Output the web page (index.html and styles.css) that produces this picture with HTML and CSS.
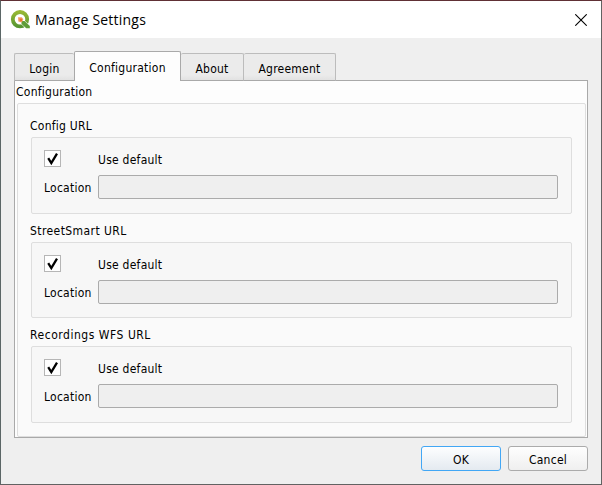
FILE: index.html
```html
<!DOCTYPE html>
<html lang="en">
<head>
<meta charset="utf-8">
<title>Manage Settings</title>
<link rel="stylesheet" href="styles.css">
</head>
<body>
<div class="window">
  <header class="titlebar">
    <svg class="logo" width="20" height="20" viewBox="0 0 20 20">
      <defs><linearGradient id="g" x1="0" y1="0" x2="0" y2="1"><stop offset="0" stop-color="#97b834"/><stop offset="1" stop-color="#589632"/></linearGradient></defs>
      <circle cx="10" cy="9.2" r="7.2" fill="none" stroke="url(#g)" stroke-width="3.8"/>
      <path d="M10 10h4l6 5.5v3.3h-4.1L10 13z" fill="#fff"/>
      <path d="M11.5 11h3l5.3 5v2.3h-3.6L11.5 14z" fill="#5f9c38"/>
      <path d="M8 7.3h3.8l1.5 2-1.5 3.2-3.5-1z" fill="#f5a36b"/>
      <path d="M9.5 8.5l2.6.2v2.5H9.8z" fill="#e9762b"/>
    </svg>
    <h1 class="title">Manage Settings</h1>
    <svg class="close" width="12" height="12" viewBox="0 0 12 12"><path d="M.3.3l11.4 11.4M11.7.3L.3 11.7" stroke="#000" stroke-width="1.1"/></svg>
  </header>
  <main class="content">
    <nav class="tabs">
      <div class="tab login">Login</div>
      <div class="tab configuration active">Configuration</div>
      <div class="tab about">About</div>
      <div class="tab agreement">Agreement</div>
    </nav>
    <section class="panel">
      <h2 class="panel-title">Configuration</h2>
      <div class="outer">
        <h3 class="label">Config URL</h3>
        <div class="group">
          <div class="row check-row"><span class="check"><svg width="15" height="15" viewBox="0 0 15 15"><path d="M3.2 7.2L6.3 12 12 2.6" fill="none" stroke="#000" stroke-width="2.3"/></svg></span><span class="use">Use default</span></div>
          <div class="row"><span class="location">Location</span><div class="field"></div></div>
        </div>
        <h3 class="label street">StreetSmart URL</h3>
        <div class="group short">
          <div class="row check-row"><span class="check"><svg width="15" height="15" viewBox="0 0 15 15"><path d="M3.2 7.2L6.3 12 12 2.6" fill="none" stroke="#000" stroke-width="2.3"/></svg></span><span class="use">Use default</span></div>
          <div class="row"><span class="location">Location</span><div class="field"></div></div>
        </div>
        <h3 class="label wfs">Recordings WFS URL</h3>
        <div class="group">
          <div class="row check-row"><span class="check"><svg width="15" height="15" viewBox="0 0 15 15"><path d="M3.2 7.2L6.3 12 12 2.6" fill="none" stroke="#000" stroke-width="2.3"/></svg></span><span class="use">Use default</span></div>
          <div class="row"><span class="location">Location</span><div class="field"></div></div>
        </div>
      </div>
    </section>
    <footer class="buttons">
      <button class="btn primary">OK</button>
      <button class="btn">Cancel</button>
    </footer>
  </main>
</div>
</body>
</html>
```
FILE: styles.css
```css
* { box-sizing: border-box; }
body {
  margin: 0;
  font: 12px/16px "DejaVu Sans Condensed", "DejaVu Sans", sans-serif;
  font-stretch: condensed;
  letter-spacing: .25px;
  color: #000;
}
h1, h2, h3 { margin: 0; font-size: inherit; font-weight: normal; }
.window {
  width: 602px;
  height: 485px;
  border: 1px solid #626262;
  border-top-color: #603035;
  border-left-color: #5b6666;
  background: #efefef;
}
.titlebar {
  display: flex;
  align-items: center;
  height: 37px;
  padding: 0 14px 0 9px;
  background: #fff;
}
.logo { display: block; }
.title {
  flex: 1;
  padding-left: 5px;
  font: 14px/20px "Open Sans", sans-serif;
  letter-spacing: .22px;
}
.close { display: block; }
.content { padding: 13px 13px 0; }
.tabs {
  display: flex;
  align-items: flex-end;
  height: 30px;
  margin-bottom: -1px;
  position: relative;
}
.tab {
  height: 28px;
  border: 1px solid #bcbcbc;
  border-left-width: 0;
  border-bottom-color: #a9a9a9;
  border-radius: 2px 2px 0 0;
  background: linear-gradient(#ebebeb 80%, #e2e2e2);
  text-align: center;
  line-height: 30px;
}
.login { width: 60px; border-left-width: 1px; border-right-width: 0; }
.configuration { width: 107px; }
.about { width: 63px; }
.agreement { width: 92px; }
.tab.active {
  height: 30px;
  border: 1px solid #a9a9a9;
  border-bottom: 0;
  background: #fdfdfd;
  line-height: 32px;
}
.panel {
  height: 358px;
  padding: 2px 1px 0 2px;
  border: 1px solid #a9a9a9;
  background: #fdfdfd;
}
.panel-title { height: 20px; line-height: 18px; margin-left: -1px; }
.outer {
  height: 334px;
  padding: 14px 13px 0;
  border: 1px solid #dedede;
  border-radius: 2px;
  background: #fafafa;
}
.label { height: 19px; margin-left: -1px; }
.group + .label { height: 28px; padding-top: 9px; }
.street { letter-spacing: .42px; }
.wfs { letter-spacing: .53px; }
.group {
  height: 77px;
  padding: 12px 13px 0 12px;
  border: 1px solid #dedede;
  border-radius: 2px;
  background: #f7f7f7;
}
.short { height: 76px; }
.row { display: flex; align-items: center; }
.check-row { height: 17px; margin-bottom: 8px; }
.check {
  width: 17px;
  height: 17px;
  margin-right: 37px;
  border: 1px solid #b6b6b6;
  background: #fff;
}
.check svg { display: block; }
.use { padding-top: 2px; }
.location { width: 54px; padding-top: 2px; }
.field {
  flex: 1;
  height: 24px;
  border: 1px solid #ababab;
  border-radius: 2px;
  background: #efefef;
}
.buttons {
  display: flex;
  justify-content: flex-end;
  gap: 7px;
  margin-top: 8px;
}
.btn {
  width: 80px;
  height: 25px;
  padding: 2px 0 0;
  border: 1px solid #ababab;
  border-radius: 3px;
  background: linear-gradient(#fefefe, #efefef);
  font: inherit;
  letter-spacing: inherit;
  color: inherit;
}
.primary {
  border-color: #42a7f5;
  background: linear-gradient(#fdfeff, #e4eaf0);
}
```
